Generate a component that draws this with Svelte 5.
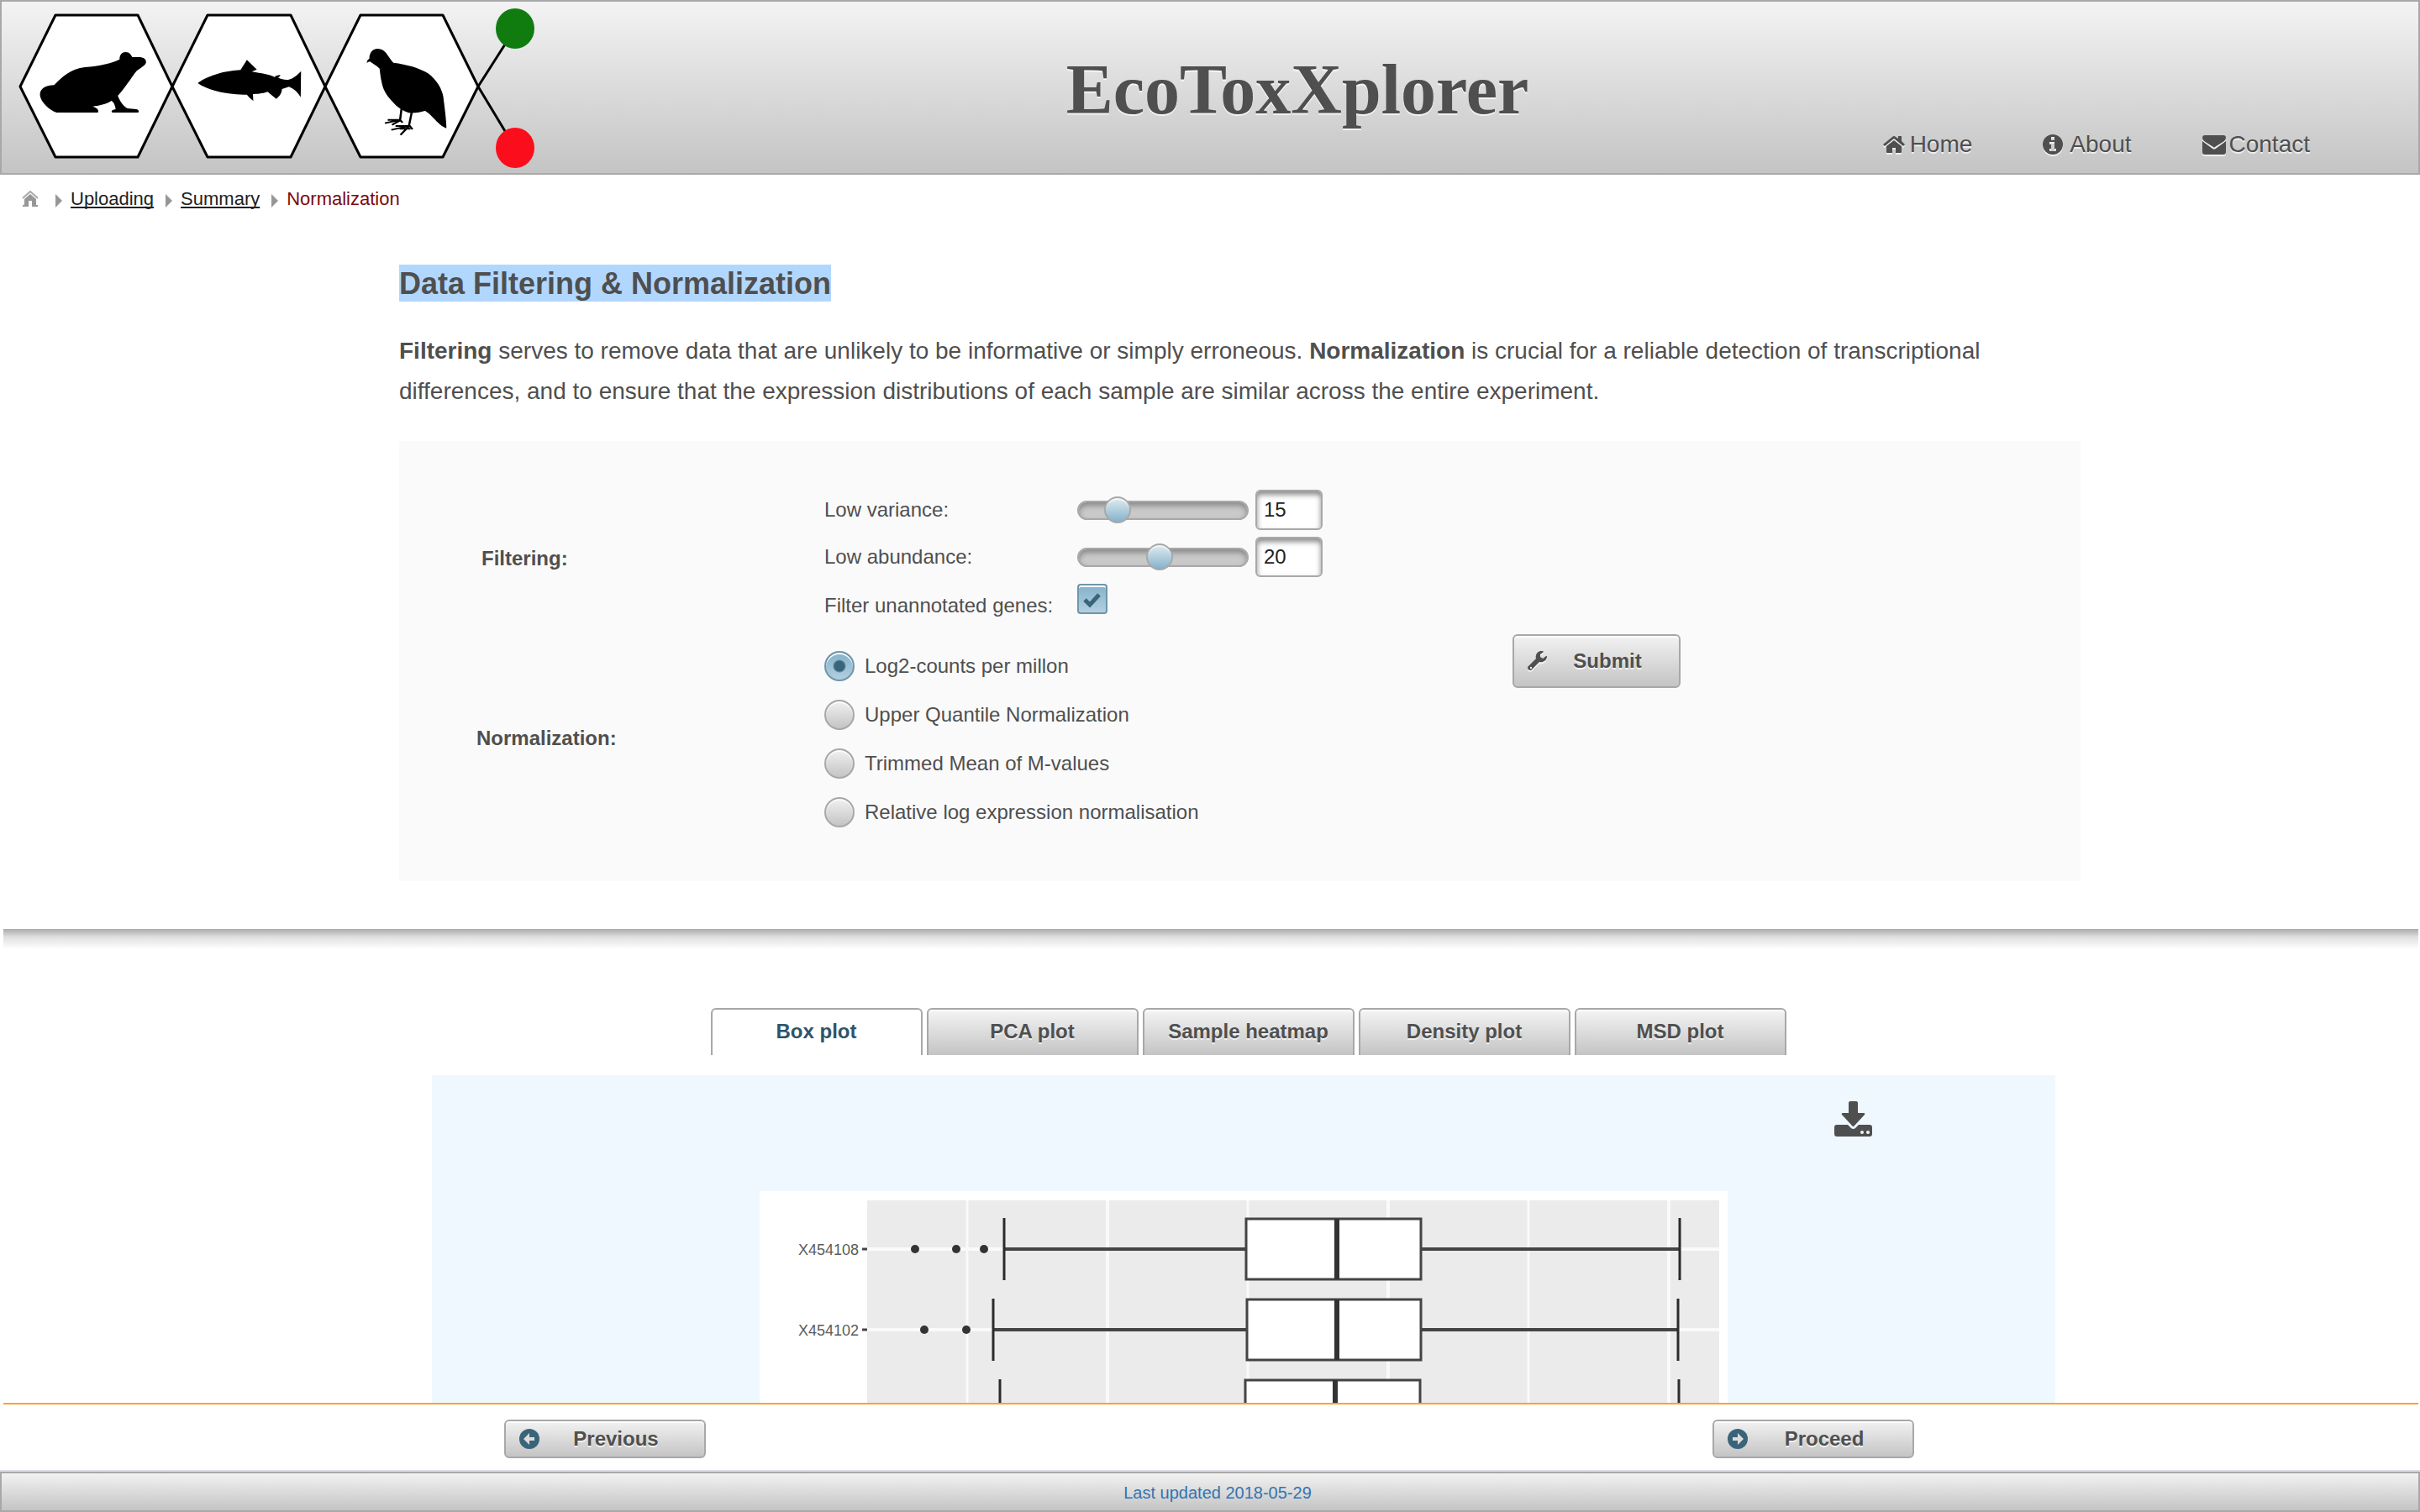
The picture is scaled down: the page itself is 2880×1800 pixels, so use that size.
<script>
  let variance = $state(15);
  let abundance = $state(20);
  let unannotated = $state(true);
  let method = $state('Log2-counts per millon');
  let active = $state('Box plot');

  const methods = [
    'Log2-counts per millon',
    'Upper Quantile Normalization',
    'Trimmed Mean of M-values',
    'Relative log expression normalisation',
  ];
  const tabs = ['Box plot', 'PCA plot', 'Sample heatmap', 'Density plot', 'MSD plot'];

  const gridlines = [
    { x: 247, w: 3 },
    { x: 414, w: 4 },
    { x: 581, w: 3 },
    { x: 748, w: 4 },
    { x: 915, w: 3 },
    { x: 1082, w: 4 },
  ];
  const samples = [
    { name: 'X454108', y: 69, low: 291, q1: 579, med: 687, q3: 787, high: 1095, dots: [185, 234, 267] },
    { name: 'X454102', y: 165, low: 278, q1: 580, med: 687, q3: 787, high: 1093, dots: [196, 246] },
    { name: '', y: 261, low: 286, q1: 578, med: 685, q3: 786, high: 1094, dots: [] },
  ];
</script>

<div class="page">
  <header class="top">
    <svg class="logo" viewBox="0 0 650 204" aria-label="EcoToxXplorer logo">
      <g stroke="#000" stroke-width="3" stroke-linejoin="round" fill="none">
        <path d="M567 101 L611 32 M567 101 L611 174" />
        <g fill="#fff">
          <path d="M22 101 L64 16 H162 L203 101 L162 185 H64 Z" />
          <path d="M203 101 L245 16 H344 L385 101 L344 185 H245 Z" />
          <path d="M385 101 L427 16 H525 L567 101 L525 185 H427 Z" />
        </g>
      </g>
      <ellipse cx="611" cy="32" rx="23" ry="24" fill="#107c10" />
      <ellipse cx="611" cy="174" rx="23" ry="24" fill="#fc0d1b" />
      <g transform="translate(-2 -2) scale(.421 .3333)">
        <path d="M160 402 C140 395 115 365 113 340 C112 315 130 305 153 304 C175 275 200 245 240 240 C280 236 320 225 338 212 C338 195 345 186 355 186 C367 186 370 196 374 204 L395 204 C408 205 413 213 413 222 C412 235 395 243 385 255 C370 280 350 320 333 342 C340 365 350 380 360 387 L385 390 C393 392 394 400 390 402 L318 402 C313 398 315 393 327 390 C325 375 322 365 315 360 C300 372 280 378 262 380 C275 386 280 392 277 402 Z" />
        <path d="M559 297 C575 280 615 258 660 252 L680 250 L698 214 L726 248 L712 256 C740 262 760 266 776 275 C780 270 788 268 792 268 C793 273 788 275 786 277 C795 284 805 286 815 285 C830 280 840 268 851 254 L850 347 C842 330 832 318 817 310 L797 318 C797 332 790 345 781 353 C772 345 765 337 757 328 C740 335 725 336 715 336 L716 360 C708 352 702 345 698 338 C650 340 590 325 559 297 Z" />
        <path d="M1044 210 C1044 190 1052 174 1068 174 C1090 174 1095 200 1112 224 C1150 230 1185 242 1210 262 C1235 285 1250 320 1253 345 C1257 385 1262 430 1262 458 C1240 450 1225 415 1202 396 C1190 400 1170 406 1155 403 C1140 396 1130 388 1120 377 C1100 352 1085 330 1080 300 C1076 280 1075 265 1073 245 C1065 235 1055 228 1046 220 L1041 221 L1037 225 C1037 217 1040 213 1044 210 Z" />
        <path d="M1135 388 L1131 428 L1088 440 M1131 428 L1096 428 M1131 430 L1108 446 M1130 428 L1138 438 M1164 400 L1156 450 L1106 464 M1156 450 L1118 450 M1155 452 L1132 482 M1157 448 L1166 462 M1130 460 H1160" fill="none" stroke="#000" stroke-width="6" />
      </g>
    </svg>
    <h1>EcoToxXplorer</h1>
    <nav class="menu">
      <a class="home" href="#home">
        <svg viewBox="0 0 26 22" aria-hidden="true">
          <path d="M13 6 L4 13 V20 Q4 21 5 21 H11 V15 H15 V21 H21 Q22 21 22 20 V13 Z M18 1 H22 V7 L26 11 L24 13 L13 4 L2 13 L0 11 L11 2 Q13 0 15 2 L18 4 Z" />
        </svg>Home</a>
      <a class="about" href="#about">
        <svg viewBox="0 0 24 24" aria-hidden="true">
          <path fill-rule="evenodd" d="M12 0 A12 12 0 1 1 12 24 A12 12 0 1 1 12 0 Z M10 3 V7 H14 V3 Z M8 9 V12 H10 V17 H8 V20 H16 V17 H14 V9 Z" />
        </svg>About</a>
      <a class="contact" href="#contact">
        <svg viewBox="0 0 28 23" aria-hidden="true">
          <path d="M3 0 H25 Q28 0 28 3 Q28 5 26 7 L15 14 Q14 15 13 14 L2 7 Q0 5 0 3 Q0 0 3 0 Z M0 7 L12 16 Q14 17.500 16 16 L28 7 V20 Q28 23 25 23 H3 Q0 23 0 20 Z" />
        </svg>Contact</a>
    </nav>
  </header>

  <main>
    <nav class="crumbs" aria-label="Breadcrumb">
      <a href="#start" class="crumb-home" aria-label="Start">
        <svg viewBox="0 0 20 20" width="20" height="20" aria-hidden="true">
          <path d="M1 9 L10 1 L19 9" fill="none" stroke="#a9a9a9" stroke-width="2" />
          <path d="M10 4 L17 10 V17 H19 V19 H12 V12 H8 V19 H1 V17 H3 V10 Z" fill="#979797" />
        </svg>
      </a>
      <i class="arrow"></i><a href="#uploading">Uploading</a>
      <i class="arrow"></i><a href="#summary">Summary</a>
      <i class="arrow"></i><span>Normalization</span>
    </nav>

    <section class="content">
      <h2><mark>Data Filtering &amp; Normalization</mark></h2>
      <p><b>Filtering</b> serves to remove data that are unlikely to be informative or simply erroneous. <b>Normalization</b> is crucial for a reliable detection of transcriptional differences, and to ensure that the expression distributions of each sample are similar across the entire experiment.</p>

      <form class="panel" onsubmit={(e) => e.preventDefault()}>
        <b class="group filtering">Filtering:</b>
        <div class="filters">
          <label for="variance">Low variance:</label>
          <div class="field">
            <input type="range" id="variance" min="0" max="84" bind:value={variance} />
            <input type="text" aria-label="Low variance value" bind:value={variance} />
          </div>
          <label for="abundance">Low abundance:</label>
          <div class="field">
            <input type="range" id="abundance" min="0" max="42" bind:value={abundance} />
            <input type="text" aria-label="Low abundance value" bind:value={abundance} />
          </div>
          <label for="unannotated">Filter unannotated genes:</label>
          <div class="tick">
            <input type="checkbox" id="unannotated" bind:checked={unannotated} />
            <svg viewBox="0 0 36 36" aria-hidden="true">
              <path d="M9 19 L15 25 L26 13" fill="none" stroke="#3a647a" stroke-width="5" />
            </svg>
          </div>
        </div>
        <b class="group normalization">Normalization:</b>
        <div class="methods">
          {#each methods as m}
            <label><input type="radio" name="method" value={m} bind:group={method} />{m}</label>
          {/each}
        </div>
        <button class="btn submit" type="submit">
          <svg viewBox="0 0 24 24" aria-hidden="true">
            <path fill-rule="evenodd" d="M23 6 A7 7 0 0 1 14 13 L5 22 Q3 24 1 22 Q-1 20 1 18 L10 9 A7 7 0 0 1 18 0 L19 1 L15 4 V7 L18 9 L22 6 Z M3 19 V21 H5 V19 Z" />
          </svg>
          <span>Submit</span>
        </button>
      </form>
    </section>

    <div class="divider"></div>

    <section class="plots">
      <div class="tabs" role="tablist">
        {#each tabs as t}
          <button role="tab" class:active={active === t} aria-selected={active === t} onclick={() => (active = t)}>{t}</button>
        {/each}
      </div>
      <div class="plot">
        <a class="download" href="#download" aria-label="Download">
          <svg viewBox="0 0 45 42" aria-hidden="true">
            <path d="M19 0 H26 Q28 0 28 2 V14 H35 Q37 14 36 16 L24 29 Q22.500 31 21 29 L9 16 Q8 14 10 14 H17 V2 Q17 0 19 0 Z" />
            <path d="M3 28 H16 L20 32 Q22.500 34 25 32 L29 28 H42 Q45 28 45 31 V39 Q45 42 42 42 H3 Q0 42 0 39 V31 Q0 28 3 28 Z" />
            <circle cx="33" cy="37" r="2" fill="#f0f8ff" />
            <circle cx="40" cy="37" r="2" fill="#f0f8ff" />
          </svg>
        </a>
        <svg class="chart" viewBox="0 0 1152 300" role="img" aria-label="Box plot of samples">
          <rect width="1152" height="300" fill="#fff" />
          <rect x="128" y="11" width="1014" height="289" fill="#ebebeb" />
          {#each gridlines as g}
            <line x1={g.x} x2={g.x} y1="11" y2="300" stroke="#fafafa" stroke-width={g.w} />
          {/each}
          {#each samples as s}
            <line x1="128" x2="1142" y1={s.y} y2={s.y} stroke="#fafafa" stroke-width="4" />
            <line x1="122" x2="128" y1={s.y} y2={s.y} stroke="#444" stroke-width="3" />
            {#if s.name}
              <text x="118" y={s.y + 7} text-anchor="end">{s.name}</text>
            {/if}
            {#each s.dots as d}
              <circle cx={d} cy={s.y} r="5" fill="#333" />
            {/each}
            <g stroke="#444" stroke-width="3">
              <line x1={s.low} x2={s.q1} y1={s.y} y2={s.y} stroke-width="4" />
              <line x1={s.q3} x2={s.high} y1={s.y} y2={s.y} stroke-width="4" />
              <line x1={s.low} x2={s.low} y1={s.y - 37} y2={s.y + 37} stroke="#2b2b2b" />
              <line x1={s.high} x2={s.high} y1={s.y - 37} y2={s.y + 37} stroke="#2b2b2b" />
              <rect x={s.q1} y={s.y - 36} width={s.q3 - s.q1} height="72" fill="#fff" />
              <line x1={s.med} x2={s.med} y1={s.y - 36} y2={s.y + 36} stroke="#333" stroke-width="6" />
            </g>
          {/each}
        </svg>
      </div>
    </section>
  </main>

  <footer>
    <div class="steps">
      <button class="btn" type="button">
        <svg viewBox="0 0 24 24" aria-hidden="true">
          <circle cx="12" cy="12" r="12" fill="#3a647a" />
          <path d="M5 12 L12 5 V10 H18 V14 H12 V19 Z" fill="#dcdcdc" />
        </svg>
        <span>Previous</span>
      </button>
      <button class="btn" type="button">
        <svg viewBox="0 0 24 24" aria-hidden="true">
          <circle cx="12" cy="12" r="12" fill="#3a647a" />
          <path d="M19 12 L12 5 V10 H6 V14 H12 V19 Z" fill="#dcdcdc" />
        </svg>
        <span>Proceed</span>
      </button>
    </div>
    <div class="updated">Last updated 2018-05-29</div>
  </footer>
</div>

<style>
  :global(body) {
    margin: 0;
    background: #fff;
  }
  .page {
    height: 100vh;
    display: flex;
    flex-direction: column;
    font-family: 'Liberation Sans', Arial, sans-serif;
    font-size: 24px;
    line-height: 32px;
    color: #4f4f4f;
  }
  .page :global(*) {
    box-sizing: border-box;
  }
  .top {
    flex: none;
    height: 208px;
    display: grid;
    grid-template-columns: 1fr auto 1fr;
    border: 2px solid #a8a8a8;
    background: linear-gradient(#f3f3f3, #c4c4c4);
    text-shadow: 0 2px 0 rgba(255, 255, 255, 0.7);
  }
  .logo {
    width: 650px;
    height: 204px;
  }
  h1 {
    margin: 0;
    padding: 58px 0 0 208px;
    font: bold 84px/94px 'Liberation Serif', 'Times New Roman', serif;
  }
  .menu {
    display: flex;
    justify-content: flex-end;
    align-items: flex-end;
    gap: 84px;
    padding: 0 129px 16px 0;
    font-size: 28px;
    line-height: 36px;
  }
  .menu a {
    display: flex;
    align-items: center;
    color: inherit;
    text-decoration: none;
  }
  .menu svg {
    fill: #4f4f4f;
    filter: drop-shadow(0 2px 0 rgba(255, 255, 255, 0.7));
  }
  .home svg {
    width: 26px;
    height: 22px;
    margin-right: 6px;
  }
  .about svg {
    width: 24px;
    height: 24px;
    margin-right: 8px;
  }
  .contact svg {
    width: 28px;
    height: 23px;
    margin-right: 4px;
  }

  main {
    flex: 1;
    min-height: 0;
    overflow: hidden;
  }
  .crumbs {
    display: flex;
    align-items: center;
    padding: 13px 26px 0;
    font-size: 22px;
  }
  .crumbs a {
    color: #222;
    text-decoration: underline 2px;
    text-underline-offset: 2px;
    text-decoration-skip-ink: none;
  }
  .crumbs span {
    color: #7d0a0a;
  }
  .crumb-home {
    display: flex;
    margin-right: 6px;
  }
  .arrow {
    margin: 4px 10px 0 14px;
    border-left: 8px solid #979797;
    border-top: 8px solid transparent;
    border-bottom: 8px solid transparent;
  }
  .content {
    margin: 62px 404px 0 475px;
  }
  h2 {
    margin: 0;
    font-size: 36px;
  }
  mark {
    display: block;
    width: fit-content;
    padding-top: 2px;
    background: #b2d7fe;
    color: inherit;
    line-height: 42px;
  }
  p {
    margin: 35px 0;
    padding-right: 100px;
    font-size: 28px;
    line-height: 48px;
  }
  .panel {
    display: grid;
    grid-template-columns: 506px 819px auto;
    row-gap: 28px;
    align-items: center;
    padding: 58px 0 64px;
    background: #fafafa;
  }
  .filtering {
    padding-left: 98px;
  }
  .normalization {
    padding: 0 0 2px 92px;
  }
  .filters {
    display: grid;
    grid-template-columns: 301px auto;
    grid-template-rows: 48px 48px 52px;
    row-gap: 8px;
    align-items: center;
  }
  .field {
    display: flex;
    align-items: center;
    gap: 8px;
  }
  input {
    margin: 0;
    appearance: none;
    font: inherit;
  }
  input[type='text'] {
    width: 80px;
    height: 48px;
    padding: 0 8px;
    border: 2px solid #a8a8a8;
    border-radius: 6px;
    background: #fff;
    box-shadow: inset 0 4px 6px #8a8a8a;
    color: #222;
  }
  input[type='range'] {
    width: 204px;
    height: 32px;
    background: none;
  }
  input[type='range']::-webkit-slider-runnable-track {
    height: 23px;
    border: 2px solid #a8a8a8;
    border-radius: 12px;
    background: #c9c9c9;
    box-shadow: inset 0 4px 6px #8a8a8a;
  }
  input[type='range']::-webkit-slider-thumb {
    appearance: none;
    width: 32px;
    height: 32px;
    margin-top: -7px;
    border: 2px solid #a8a8a8;
    border-radius: 50%;
    background: linear-gradient(#e0ebf1, #85b2cb);
    box-shadow: inset 0 2px 0 rgba(255, 255, 255, 0.6);
  }
  .tick {
    align-self: start;
    display: grid;
    width: 36px;
  }
  .tick input,
  .tick svg {
    grid-area: 1 / 1;
    width: 36px;
    height: 36px;
    pointer-events: none;
  }
  .tick svg {
    visibility: hidden;
  }
  .tick input {
    pointer-events: auto;
    border: 2px solid #a8a8a8;
    border-radius: 4px;
    background: linear-gradient(#eee, #c4c4c4);
  }
  .tick input:checked {
    border-color: #6f96ab;
    background: linear-gradient(#85b2cb, #b3cfdf);
    box-shadow: inset 0 2px 0 #fff;
  }
  .tick input:checked + svg {
    visibility: visible;
  }
  .methods {
    display: grid;
    gap: 22px;
  }
  .methods label {
    display: flex;
    align-items: center;
    gap: 12px;
    height: 36px;
  }
  input[type='radio'] {
    width: 36px;
    height: 36px;
    border: 2px solid #a8a8a8;
    border-radius: 50%;
    background: linear-gradient(#f0f0f0, #c4c4c4);
    box-shadow: inset 0 2px 0 rgba(255, 255, 255, 0.8);
  }
  input[type='radio']:checked {
    border-color: #6f96ab;
    background: radial-gradient(circle, #3a647a 6px, transparent 8px), linear-gradient(#85b2cb, #b3cfdf);
    box-shadow: inset 0 2px 0 #fff;
  }
  .btn {
    display: flex;
    align-items: center;
    width: 240px;
    height: 46px;
    padding: 0 14px 0 16px;
    border: 2px solid #a8a8a8;
    border-radius: 6px;
    background: linear-gradient(#f2f2f2, #c4c4c4);
    box-shadow: inset 0 2px 0 rgba(255, 255, 255, 0.9);
    color: #4f4f4f;
    font: bold 24px/32px 'Liberation Sans', Arial, sans-serif;
    text-shadow: 0 2px 0 rgba(255, 255, 255, 0.7);
  }
  .btn svg {
    flex: none;
    width: 24px;
    height: 24px;
    fill: #4f4f4f;
  }
  .btn span {
    flex: 1;
    text-align: center;
  }
  .submit {
    grid-column: 3;
    grid-row: 1 / 3;
    width: 200px;
    height: 64px;
    margin-top: 6px;
  }
  .submit svg {
    filter: drop-shadow(0 2px 0 rgba(255, 255, 255, 0.7));
  }
  .divider {
    height: 24px;
    margin: 57px 2px 70px 4px;
    background: linear-gradient(#aaa, #e0e0e0 40%, #fff);
  }
  .plots {
    margin: 0 434px 0 514px;
  }
  .tabs {
    display: flex;
    justify-content: center;
    gap: 5px;
    padding: 0 0 24px 11px;
  }
  .tabs button {
    width: 252px;
    height: 56px;
    padding: 0 0 2px;
    border: 2px solid #a8a8a8;
    border-bottom: 0;
    border-radius: 6px 6px 0 0;
    background: linear-gradient(#f4f4f4, #c4c4c4);
    box-shadow: inset 0 2px 0 rgba(255, 255, 255, 0.9);
    color: #4f4f4f;
    font: bold 24px/32px 'Liberation Sans', Arial, sans-serif;
    text-shadow: 0 2px 0 rgba(255, 255, 255, 0.7);
    white-space: nowrap;
  }
  .tabs button.active {
    background: #fff;
    color: #2e5468;
    text-shadow: none;
  }
  .plot {
    display: flex;
    flex-direction: column;
    align-items: center;
    padding-top: 31px;
    background: #f0f8ff;
  }
  .download {
    display: flex;
    align-self: flex-end;
    margin: 0 218px 65px 0;
  }
  .download svg {
    width: 45px;
    height: 42px;
    fill: #4f4f4f;
  }
  .chart {
    width: 1152px;
    height: 300px;
  }
  .chart text {
    font-size: 18px;
    fill: #5c5c5c;
  }

  footer {
    flex: none;
    background: #fff;
  }
  .steps {
    display: flex;
    justify-content: space-between;
    margin: 0 2px 0 4px;
    padding: 18px 600px 14px 596px;
    border-top: 2px solid #ffa326;
  }
  .updated {
    height: 48px;
    margin-top: 2px;
    padding-left: 18px;
    border: 2px solid #a8a8a8;
    background: linear-gradient(#f2f2f2, #c4c4c4);
    box-shadow: 0 -2px 0 #dcdce8;
    color: #3374b0;
    font-size: 20px;
    line-height: 46px;
    text-align: center;
  }
</style>
